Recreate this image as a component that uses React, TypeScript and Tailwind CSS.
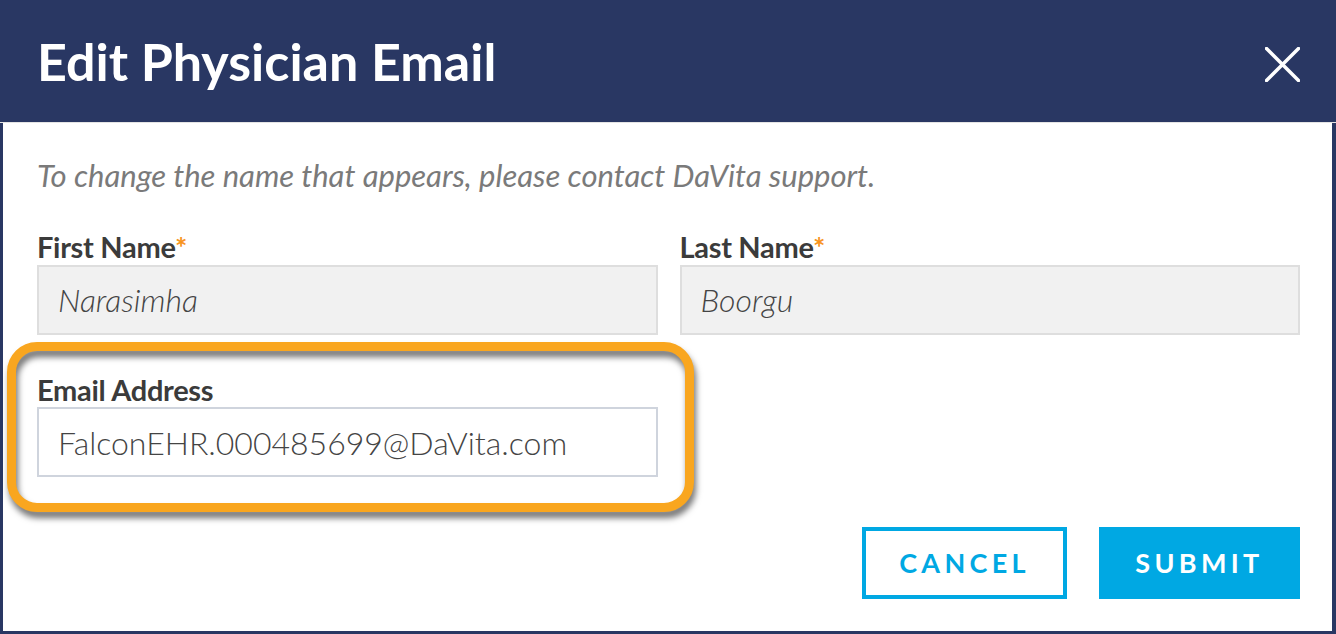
import React from 'react';

const font = { fontFamily: 'Lato, "Open Sans", sans-serif' };

const Label: React.FC<{ text: string; required?: boolean }> = ({ text, required }) => (
  <label className="block text-[29px] leading-[29px] font-bold text-[#3b3b3b] tracking-[-0.3px]">
    {text}
    {required && <span className="text-[#f7941d]">*</span>}
  </label>
);

const ReadOnlyField: React.FC<{ value: string }> = ({ value }) => (
  <div className="h-[70px] flex items-center px-[19px] bg-[#f1f1f1] border-2 border-[#dedede] text-[32px] italic font-light text-[#444]">
    {value}
  </div>
);

export default function App() {
  return (
    <div className="relative w-[1336px] h-[634px] bg-white overflow-hidden" style={font}>
      {/* Header */}
      <div className="h-[122px] bg-[#293763] flex items-center justify-between pl-[37px] pr-[36px]">
        <h1 className="text-[52px] font-bold text-white leading-none">Edit Physician Email</h1>
        <button className="text-white mt-[6px]" title="Close">
          <svg width="35" height="35" viewBox="0 0 35 35" fill="none">
            <path d="M1.5 1.5 L33.5 33.5 M33.5 1.5 L1.5 33.5" stroke="white" strokeWidth="3.5" strokeLinecap="round" />
          </svg>
        </button>
      </div>
      <div className="h-px bg-[#e4e4e4]" />

      {/* Body */}
      <div className="h-[511px] border-l-[3px] border-r-[4px] border-b-[3px] border-[#293763] pl-[34px] pr-[32px] pt-[37px]">
        <p className="text-[31px] leading-[31px] italic text-[#7a7a7a]">
          To change the name that appears, please contact DaVita support.
        </p>

        <div className="grid grid-cols-2 gap-[22px] mt-[41px]">
          <div className="flex flex-col gap-[4px]">
            <Label text="First Name" required />
            <ReadOnlyField value="Narasimha" />
          </div>
          <div className="flex flex-col gap-[4px]">
            <Label text="Last Name" required />
            <ReadOnlyField value="Boorgu" />
          </div>
        </div>

        <div className="grid grid-cols-2 gap-[22px] mt-[40px]">
          <div className="flex flex-col gap-[3px]">
            <Label text="Email Address" />
            <input
              className="h-[70px] px-[19px] bg-white border-2 border-[#cfd4dd] text-[32px] font-light text-[#444] outline-none"
              defaultValue="FalconEHR.000485699@DaVita.com"
              style={font}
            />
          </div>
        </div>

        <div className="flex justify-end gap-[32px] mt-[50px]">
          <button className="w-[205px] h-[72px] border-[4px] border-[#00a8e3] bg-white text-[#00a8e3] text-[27px] font-bold tracking-[0.16em]">
            CANCEL
          </button>
          <button className="w-[201px] h-[72px] bg-[#00a8e3] text-white text-[27px] font-bold tracking-[0.16em]">
            SUBMIT
          </button>
        </div>
      </div>

      {/* Annotation highlight */}
      <div className="absolute left-[7px] top-[342px] w-[687px] h-[170px] border-[9px] border-[#f9a61f] rounded-[30px] drop-shadow-[2px_6px_3px_rgba(0,0,0,0.55)]" />
    </div>
  );
}
